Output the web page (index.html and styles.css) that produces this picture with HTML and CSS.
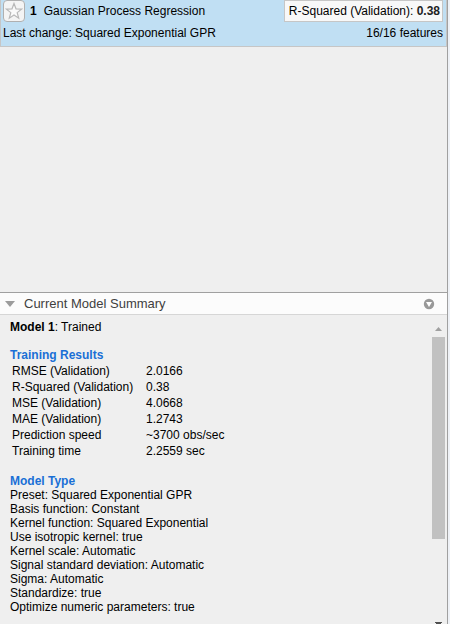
FILE: index.html
```html
<!DOCTYPE html>
<html lang="en">
<head>
<meta charset="utf-8">
<title>Models</title>
<link rel="stylesheet" href="styles.css">
</head>
<body>
<main class="app">
  <section class="models" aria-label="Models">
    <article class="card">
      <div class="card-row">
        <button class="star" type="button" aria-label="Favorite">
          <svg width="18" height="18" viewBox="0 0 18 18"><path d="M9 1.5 L11 6.8 L16.6 7.1 L12.2 10.6 L13.7 16.2 L9 13 L4.3 16.2 L5.8 10.6 L1.4 7.1 L7 6.8 Z" fill="#fafafa" stroke="#b8b8b8" stroke-width="1.2"/></svg>
        </button>
        <b class="number">1</b>
        <span class="name">Gaussian Process Regression</span>
        <span class="score">R-Squared (Validation): <b>0.38</b></span>
      </div>
      <div class="card-row details">
        <span>Last change: Squared Exponential GPR</span>
        <span class="features">16/16 features</span>
      </div>
    </article>
  </section>
  <section class="summary">
    <header class="summary-head">
      <button class="icon-button" type="button" aria-label="Collapse summary">
        <svg width="12" height="8" viewBox="0 0 12 8"><path d="M1 1 H11 L6 7 Z" fill="#9c9c9c"/></svg>
      </button>
      <h2 class="summary-title">Current Model Summary</h2>
      <button class="icon-button" type="button" aria-label="Panel actions">
        <svg width="12" height="12" viewBox="0 0 12 12"><circle cx="6" cy="6" r="5.2" fill="#999"/><path d="M3 4 H9 L6 9 Z" fill="#fff"/></svg>
      </button>
    </header>
    <div class="summary-body">
      <div class="content">
        <p class="line"><b>Model 1</b>: Trained</p>
        <h3 class="heading">Training Results</h3>
        <table class="results">
          <tr><th scope="row">RMSE (Validation)</th><td>2.0166</td></tr>
          <tr><th scope="row">R-Squared (Validation)</th><td>0.38</td></tr>
          <tr><th scope="row">MSE (Validation)</th><td>4.0668</td></tr>
          <tr><th scope="row">MAE (Validation)</th><td>1.2743</td></tr>
          <tr><th scope="row">Prediction speed</th><td>~3700 obs/sec</td></tr>
          <tr><th scope="row">Training time</th><td>2.2559 sec</td></tr>
        </table>
        <h3 class="heading">Model Type</h3>
        <p class="line">Preset: Squared Exponential GPR</p>
        <p class="line">Basis function: Constant</p>
        <p class="line">Kernel function: Squared Exponential</p>
        <p class="line">Use isotropic kernel: true</p>
        <p class="line">Kernel scale: Automatic</p>
        <p class="line">Signal standard deviation: Automatic</p>
        <p class="line">Sigma: Automatic</p>
        <p class="line">Standardize: true</p>
        <p class="line">Optimize numeric parameters: true</p>
      </div>
      <div class="scrollbar" aria-hidden="true">
        <svg width="7" height="4" viewBox="0 0 7 4"><path d="M0 4 L3.5 0 L7 4 Z" fill="#a0a0a0"/></svg>
        <div class="track"><div class="thumb"></div></div>
        <svg width="7" height="2" viewBox="0 0 7 2"><path d="M0 0 H7 V1 H6 V2 H1 V1 H0 Z" fill="#505050"/></svg>
      </div>
    </div>
  </section>
</main>
</body>
</html>
```

FILE: styles.css
```css
* {
  box-sizing: border-box;
}

body {
  margin: 0;
  background: #eef1f6;
  color: #000;
  font: 12px/14px "Liberation Sans", Arial, sans-serif;
}

h2,
h3,
p {
  margin: 0;
}

button {
  padding: 0;
  font: inherit;
}

.app {
  display: flex;
  flex-direction: column;
  height: 100vh;
  margin-right: 2px;
  border-right: 1px solid #a0a0a0;
  background: #efefef;
}

.models {
  flex: 0 0 292px;
}

.card {
  padding: 0 3px 6px 2px;
  border: 1px solid #c6c6c6;
  border-top: 0;
  background: #c0dff3;
}

.card-row {
  display: flex;
  align-items: center;
}

.star {
  display: flex;
  align-items: center;
  justify-content: center;
  width: 22px;
  height: 22px;
  border: 1px solid #b0b0b0;
  border-radius: 4px;
  background: #f4f4f4;
}

.number {
  margin-left: 5px;
}

.name {
  margin-left: 7px;
}

.score {
  margin-left: auto;
  padding: 3px 2px 3px 4px;
  border: 1px solid #c6c6c6;
  background: #f8f8f8;
}

.score b {
  color: #222;
}

.details {
  padding-top: 4px;
}

.features {
  margin-left: auto;
}

.summary {
  display: flex;
  flex: 1;
  flex-direction: column;
  min-height: 0;
}

.summary-head {
  display: flex;
  align-items: center;
  height: 23px;
  padding: 0 12px 0 4px;
  border-top: 1px solid #a0a0a0;
  border-bottom: 1px solid #d6d6d6;
  background: #fcfcfc;
}

.icon-button {
  display: flex;
  border: 0;
  background: none;
}

.summary-title {
  flex: 1;
  margin-left: 8px;
  color: #404040;
  font-size: 13px;
  font-weight: normal;
}

.summary-body {
  display: flex;
  flex: 1;
  min-height: 0;
}

.content {
  flex: 1;
  padding: 5px 10px 0;
  overflow: hidden;
}

.heading {
  margin-top: 14px;
  color: #1a6fd6;
  font-size: 12px;
}

.results {
  margin: 1px 0 15px 2px;
  border-collapse: collapse;
  line-height: 16px;
}

.results th {
  width: 134px;
  padding: 0;
  font-weight: normal;
  text-align: left;
}

.results td {
  padding: 0;
}

.scrollbar {
  display: flex;
  flex-direction: column;
  align-items: center;
  width: 13px;
  margin-right: 2px;
  padding-top: 12px;
}

.track {
  flex: 1;
  align-self: stretch;
  padding-top: 6px;
}

.thumb {
  height: 71%;
  background: #c1c1c1;
}
```
